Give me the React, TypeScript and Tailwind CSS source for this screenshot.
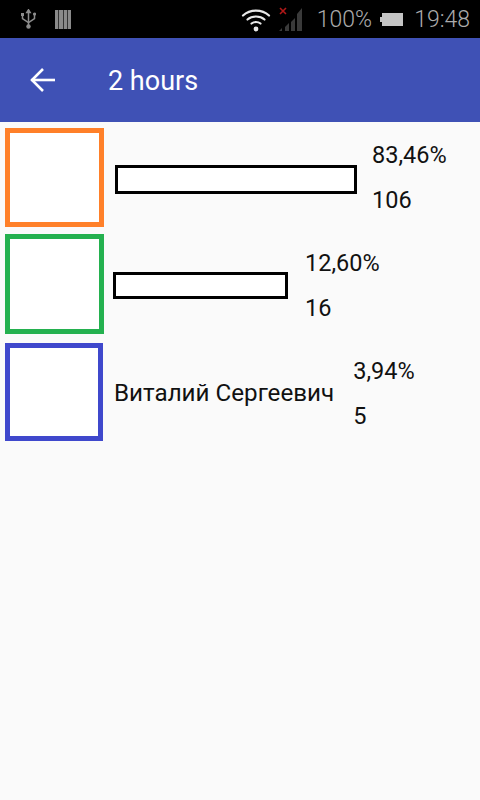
const rows = [
  { color: "border-[#ff8029]", box: "w-[99px] h-[99px]", gap: "ml-[11px]", mt: "mt-[6px]", barW: "w-[242px]", barH: "h-[29px] mt-[4px]", statGap: "ml-[15px]", pct: "83,46%", count: "106" },
  { color: "border-[#24b14f]", box: "w-[99px] h-[100px]", gap: "ml-[9px]", mt: "mt-[7px]", barW: "w-[175px]", barH: "h-[27px] mt-[2px]", statGap: "ml-[17px] mt-[2px]", pct: "12,60%", count: "16" },
]

function StatusBar() {
  return (
    <div className="flex h-[38px] items-center bg-black pl-[21px] pr-[10px] text-[#ababab]">
      <svg width="15" height="21" viewBox="0 0 15 21" fill="none" stroke="#8c8c8c" strokeWidth="1.5">
        <path d="M7.5 1v17" />
        <path d="M5.8 3.5 7.5 .8l1.7 2.7z" fill="#8c8c8c" />
        <path d="M1.5 6v3.5l6 4 6-4V6" />
        <circle cx="7.5" cy="17.5" r="2.2" fill="#8c8c8c" stroke="none" />
        <rect x="0" y="4" width="3" height="3" fill="#8c8c8c" stroke="none" />
        <circle cx="13.5" cy="5" r="1.6" fill="#8c8c8c" stroke="none" />
      </svg>
      <div className="ml-[19px] flex h-[19px] w-[16px] justify-between bg-[#8a8a8a] px-[3px]">
        <span className="w-px bg-[#333]" />
        <span className="w-px bg-[#333]" />
        <span className="w-px bg-[#333]" />
      </div>
      <svg className="ml-auto" width="30" height="26" viewBox="0 0 30 26" fill="none" stroke="#e8e8e8" strokeWidth="2.2" strokeLinecap="round">
        <path d="M2 9.5C9 3 21 3 28 9.5" />
        <path d="M6.5 13.5C11 9.5 19 9.5 23.5 13.5" />
        <path d="M10.5 17.5C13 15.5 17 15.5 19.5 17.5" />
        <circle cx="15" cy="23" r="2.4" fill="#e8e8e8" stroke="none" />
      </svg>
      <svg className="ml-[8px]" width="26" height="26" viewBox="0 0 26 26">
        <path d="M0 25h3v-3zM6 25h4v-8l-4 4zM12 25h4V12l-4 4zM18 25h5V2l-5 6z" fill="#3a3a3a" />
        <path d="M1 2l6 6M7 2 1 8" stroke="#b01818" strokeWidth="1.6" />
      </svg>
      <span className="ml-[12px] font-['Roboto',sans-serif] text-[23px] font-light leading-none">100%</span>
      <div className="ml-[8px] flex items-center">
        <span className="h-[5px] w-[2px] bg-[#c4c4c4]" />
        <span className="h-[13px] w-[21px] bg-[#c4c4c4]" />
      </div>
      <span className="ml-[11px] font-['Roboto',sans-serif] text-[23px] font-light leading-none">19:48</span>
    </div>
  )
}

function Stat({ pct, count, className }: { pct: string; count: string; className: string }) {
  return (
    <div className={`flex flex-col gap-[17px] text-[23.5px] leading-[28px] ${className}`}>
      <span>{pct}</span>
      <span>{count}</span>
    </div>
  )
}

export default function App() {
  return (
    <div className="min-h-[800px] bg-[#fafafa] font-['Roboto',sans-serif] text-[#111]">
      <StatusBar />
      <header className="flex h-[84px] items-center bg-[#3f51b5] text-white">
        <svg className="ml-[30px]" width="25" height="24" viewBox="0 0 25 24" fill="none" stroke="white" strokeWidth="2.6">
          <path d="M1.5 12H25" />
          <path d="M13 1 2 12l11 11" />
        </svg>
        <h1 className="ml-[53px] mt-[2px] text-[27px] leading-none">2 hours</h1>
      </header>
      <main className="pl-[5px]">
        {rows.map((row) => (
          <div key={row.pct} className={`flex items-center ${row.mt}`}>
            <div className={`border-[5px] bg-white ${row.color} ${row.box}`} />
            <div className={`border-[3px] border-black bg-white ${row.gap} ${row.barW} ${row.barH}`} />
            <Stat pct={row.pct} count={row.count} className={row.statGap} />
          </div>
        ))}
        <div className="mt-[9px] flex items-center">
          <div className="h-[98px] w-[98px] border-[5px] border-[#3f48cc] bg-white" />
          <span className="ml-[11px] mt-[2px] text-[24.2px] leading-[28px]">Виталий Сергеевич</span>
          <Stat pct="3,94%" count="5" className="ml-[19px] mt-[2px]" />
        </div>
      </main>
    </div>
  )
}
